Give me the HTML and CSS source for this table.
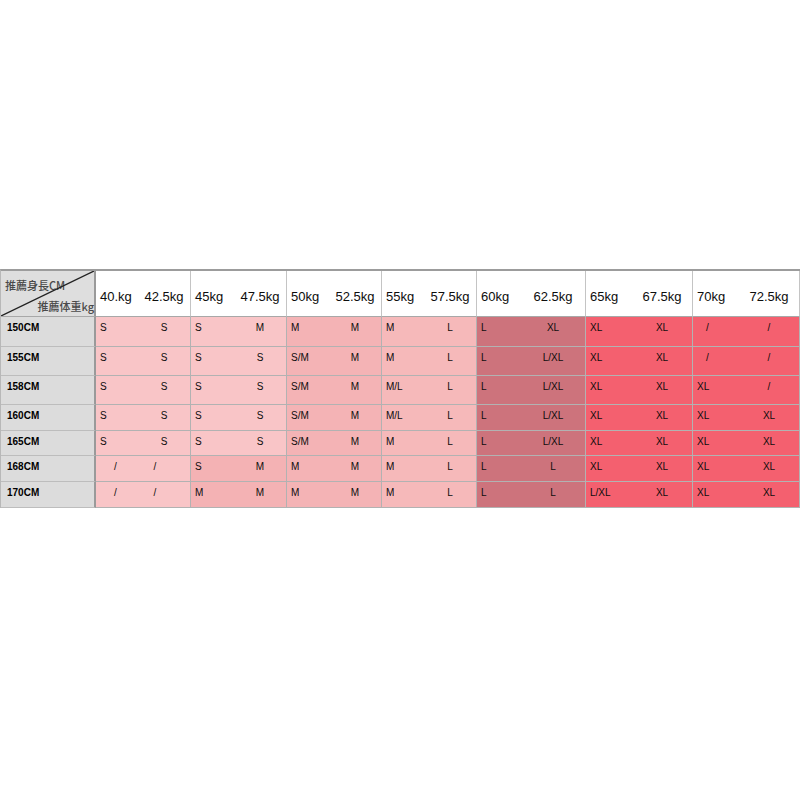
FILE: index.html
```html
<!DOCTYPE html>
<html lang="ja">
<head>
<meta charset="utf-8">
<title>Size chart</title>
<link rel="stylesheet" href="styles.css">
</head>
<body>
<div class="page">
  <div class="chart">
    <div class="cell corner">
      <svg class="diag" viewBox="0 0 100 100" preserveAspectRatio="none"><line x1="0" y1="100" x2="100" y2="0" stroke="#222" stroke-width="1.3" vector-effect="non-scaling-stroke"/></svg>
      <span class="t1">推薦身長CM</span>
      <span class="t2">推薦体重kg</span>
    </div>
    <div class="cell hd"><span class="l">40.kg</span><span class="r">42.5kg</span></div>
    <div class="cell hd"><span class="l">45kg</span><span class="r">47.5kg</span></div>
    <div class="cell hd"><span class="l">50kg</span><span class="r">52.5kg</span></div>
    <div class="cell hd"><span class="l">55kg</span><span class="r">57.5kg</span></div>
    <div class="cell hd w5"><span class="l">60kg</span><span class="r">62.5kg</span></div>
    <div class="cell hd w6"><span class="l">65kg</span><span class="r">67.5kg</span></div>
    <div class="cell hd w6"><span class="l">70kg</span><span class="r">72.5kg</span></div>

    <div class="cell lab">150CM</div>
    <div class="cell c1"><span class="l">S</span><span class="r">S</span></div>
    <div class="cell c1"><span class="l">S</span><span class="r">M</span></div>
    <div class="cell c3"><span class="l">M</span><span class="r">M</span></div>
    <div class="cell c4"><span class="l">M</span><span class="r">L</span></div>
    <div class="cell c5 w5"><span class="l">L</span><span class="r">XL</span></div>
    <div class="cell c6 w6"><span class="l">XL</span><span class="r">XL</span></div>
    <div class="cell c6 w6"><span class="l sl">/</span><span class="r">/</span></div>

    <div class="cell lab">155CM</div>
    <div class="cell c1"><span class="l">S</span><span class="r">S</span></div>
    <div class="cell c1"><span class="l">S</span><span class="r">S</span></div>
    <div class="cell c3"><span class="l">S/M</span><span class="r">M</span></div>
    <div class="cell c4"><span class="l">M</span><span class="r">L</span></div>
    <div class="cell c5 w5"><span class="l">L</span><span class="r">L/XL</span></div>
    <div class="cell c6 w6"><span class="l">XL</span><span class="r">XL</span></div>
    <div class="cell c6 w6"><span class="l sl">/</span><span class="r">/</span></div>

    <div class="cell lab">158CM</div>
    <div class="cell c1"><span class="l">S</span><span class="r">S</span></div>
    <div class="cell c1"><span class="l">S</span><span class="r">S</span></div>
    <div class="cell c3"><span class="l">S/M</span><span class="r">M</span></div>
    <div class="cell c4"><span class="l">M/L</span><span class="r">L</span></div>
    <div class="cell c5 w5"><span class="l">L</span><span class="r">L/XL</span></div>
    <div class="cell c6 w6"><span class="l">XL</span><span class="r">XL</span></div>
    <div class="cell c6 w6"><span class="l">XL</span><span class="r">/</span></div>

    <div class="cell lab">160CM</div>
    <div class="cell c1"><span class="l">S</span><span class="r">S</span></div>
    <div class="cell c1"><span class="l">S</span><span class="r">S</span></div>
    <div class="cell c3"><span class="l">S/M</span><span class="r">M</span></div>
    <div class="cell c4"><span class="l">M/L</span><span class="r">L</span></div>
    <div class="cell c5 w5"><span class="l">L</span><span class="r">L/XL</span></div>
    <div class="cell c6 w6"><span class="l">XL</span><span class="r">XL</span></div>
    <div class="cell c6 w6"><span class="l">XL</span><span class="r">XL</span></div>

    <div class="cell lab">165CM</div>
    <div class="cell c1"><span class="l">S</span><span class="r">S</span></div>
    <div class="cell c1"><span class="l">S</span><span class="r">S</span></div>
    <div class="cell c3"><span class="l">S/M</span><span class="r">M</span></div>
    <div class="cell c4"><span class="l">M</span><span class="r">L</span></div>
    <div class="cell c5 w5"><span class="l">L</span><span class="r">L/XL</span></div>
    <div class="cell c6 w6"><span class="l">XL</span><span class="r">XL</span></div>
    <div class="cell c6 w6"><span class="l">XL</span><span class="r">XL</span></div>

    <div class="cell lab">168CM</div>
    <div class="cell c1 slc"><span class="l">/</span><span class="r">/</span></div>
    <div class="cell c2"><span class="l">S</span><span class="r">M</span></div>
    <div class="cell c3"><span class="l">M</span><span class="r">M</span></div>
    <div class="cell c4"><span class="l">M</span><span class="r">L</span></div>
    <div class="cell c5 w5"><span class="l">L</span><span class="r">L</span></div>
    <div class="cell c6 w6"><span class="l">XL</span><span class="r">XL</span></div>
    <div class="cell c6 w6"><span class="l">XL</span><span class="r">XL</span></div>

    <div class="cell lab">170CM</div>
    <div class="cell c1 slc"><span class="l">/</span><span class="r">/</span></div>
    <div class="cell c2"><span class="l">M</span><span class="r">M</span></div>
    <div class="cell c3"><span class="l">M</span><span class="r">M</span></div>
    <div class="cell c4"><span class="l">M</span><span class="r">L</span></div>
    <div class="cell c5 w5"><span class="l">L</span><span class="r">L</span></div>
    <div class="cell c6 w6"><span class="l">L/XL</span><span class="r">XL</span></div>
    <div class="cell c6 w6"><span class="l">XL</span><span class="r">XL</span></div>
  </div>
</div>
</body>
</html>
```

FILE: styles.css
```css
* {
  box-sizing: border-box;
  margin: 0;
  padding: 0;
}

body {
  margin: 0;
  background: #ffffff;
  font-family: "Liberation Sans", Arial, "Noto Sans CJK JP", sans-serif;
  color: #0d0d0d;
}

.page {
  padding-top: 269px;
}

.chart {
  width: 800px;
  display: grid;
  grid-template-columns: 95px 95px 96px 95px 95px 109px 107px 107px;
  grid-template-rows: 46px 30px 29px 29px 26px 25px 26px 26px;
  border-top: 2px solid #9c9c9c;
  border-left: 1px solid #b8b8b8;
}

.cell {
  display: flex;
  align-items: flex-start;
  border-right: 1px solid #b2b2b2;
  border-bottom: 1px solid #b2b2b2;
  font-size: 10px;
  line-height: 12px;
  padding-top: 5px;
}

.cell .l {
  flex: 1;
  padding-left: 4px;
  white-space: nowrap;
}

.cell .r {
  width: 40px;
  margin-right: 6px;
  text-align: center;
  white-space: nowrap;
}

.cell.w5 .r {
  margin-right: 12px;
}

.cell.w6 .r {
  margin-right: 10px;
}

.cell .l.sl {
  padding-left: 13px;
}

.cell.slc .l {
  padding-left: 18px;
}

.cell.slc .r {
  margin-right: 15px;
}

.hd {
  background: #ffffff;
  font-size: 13px;
  line-height: 15px;
  padding-top: 18px;
  color: #0d0d0d;
  border-right-color: #c4c4c4;
  border-bottom-color: #a8a8a8;
}

.corner {
  position: relative;
  background: #dedede;
  border-right: 2px solid #9a9a9a;
  border-bottom-color: #a8a8a8;
  flex-direction: column;
  justify-content: space-between;
  padding: 7px 0 3px 4px;
  font-family: "Noto Sans CJK JP", sans-serif;
  font-size: 11px;
  font-weight: 500;
  line-height: 14px;
  color: #4a4a4a;
}

.corner .t1 {
  align-self: flex-start;
}

.corner .t2 {
  align-self: flex-end;
}

.diag {
  position: absolute;
  left: 0;
  top: 0;
  width: 100%;
  height: 100%;
}

.lab {
  background: #dcdcdc;
  font-weight: bold;
  padding-left: 6px;
  color: #000000;
  border-right: 2px solid #9a9a9a;
  border-bottom-color: #bdbdbd;
}

.c1 { background: #f9c5c7; }
.c2 { background: #f4b2b4; }
.c3 { background: #f4b3b5; }
.c4 { background: #f6b9ba; }
.c5 { background: #cd737c; }
.c6 { background: #f4606f; }
```
